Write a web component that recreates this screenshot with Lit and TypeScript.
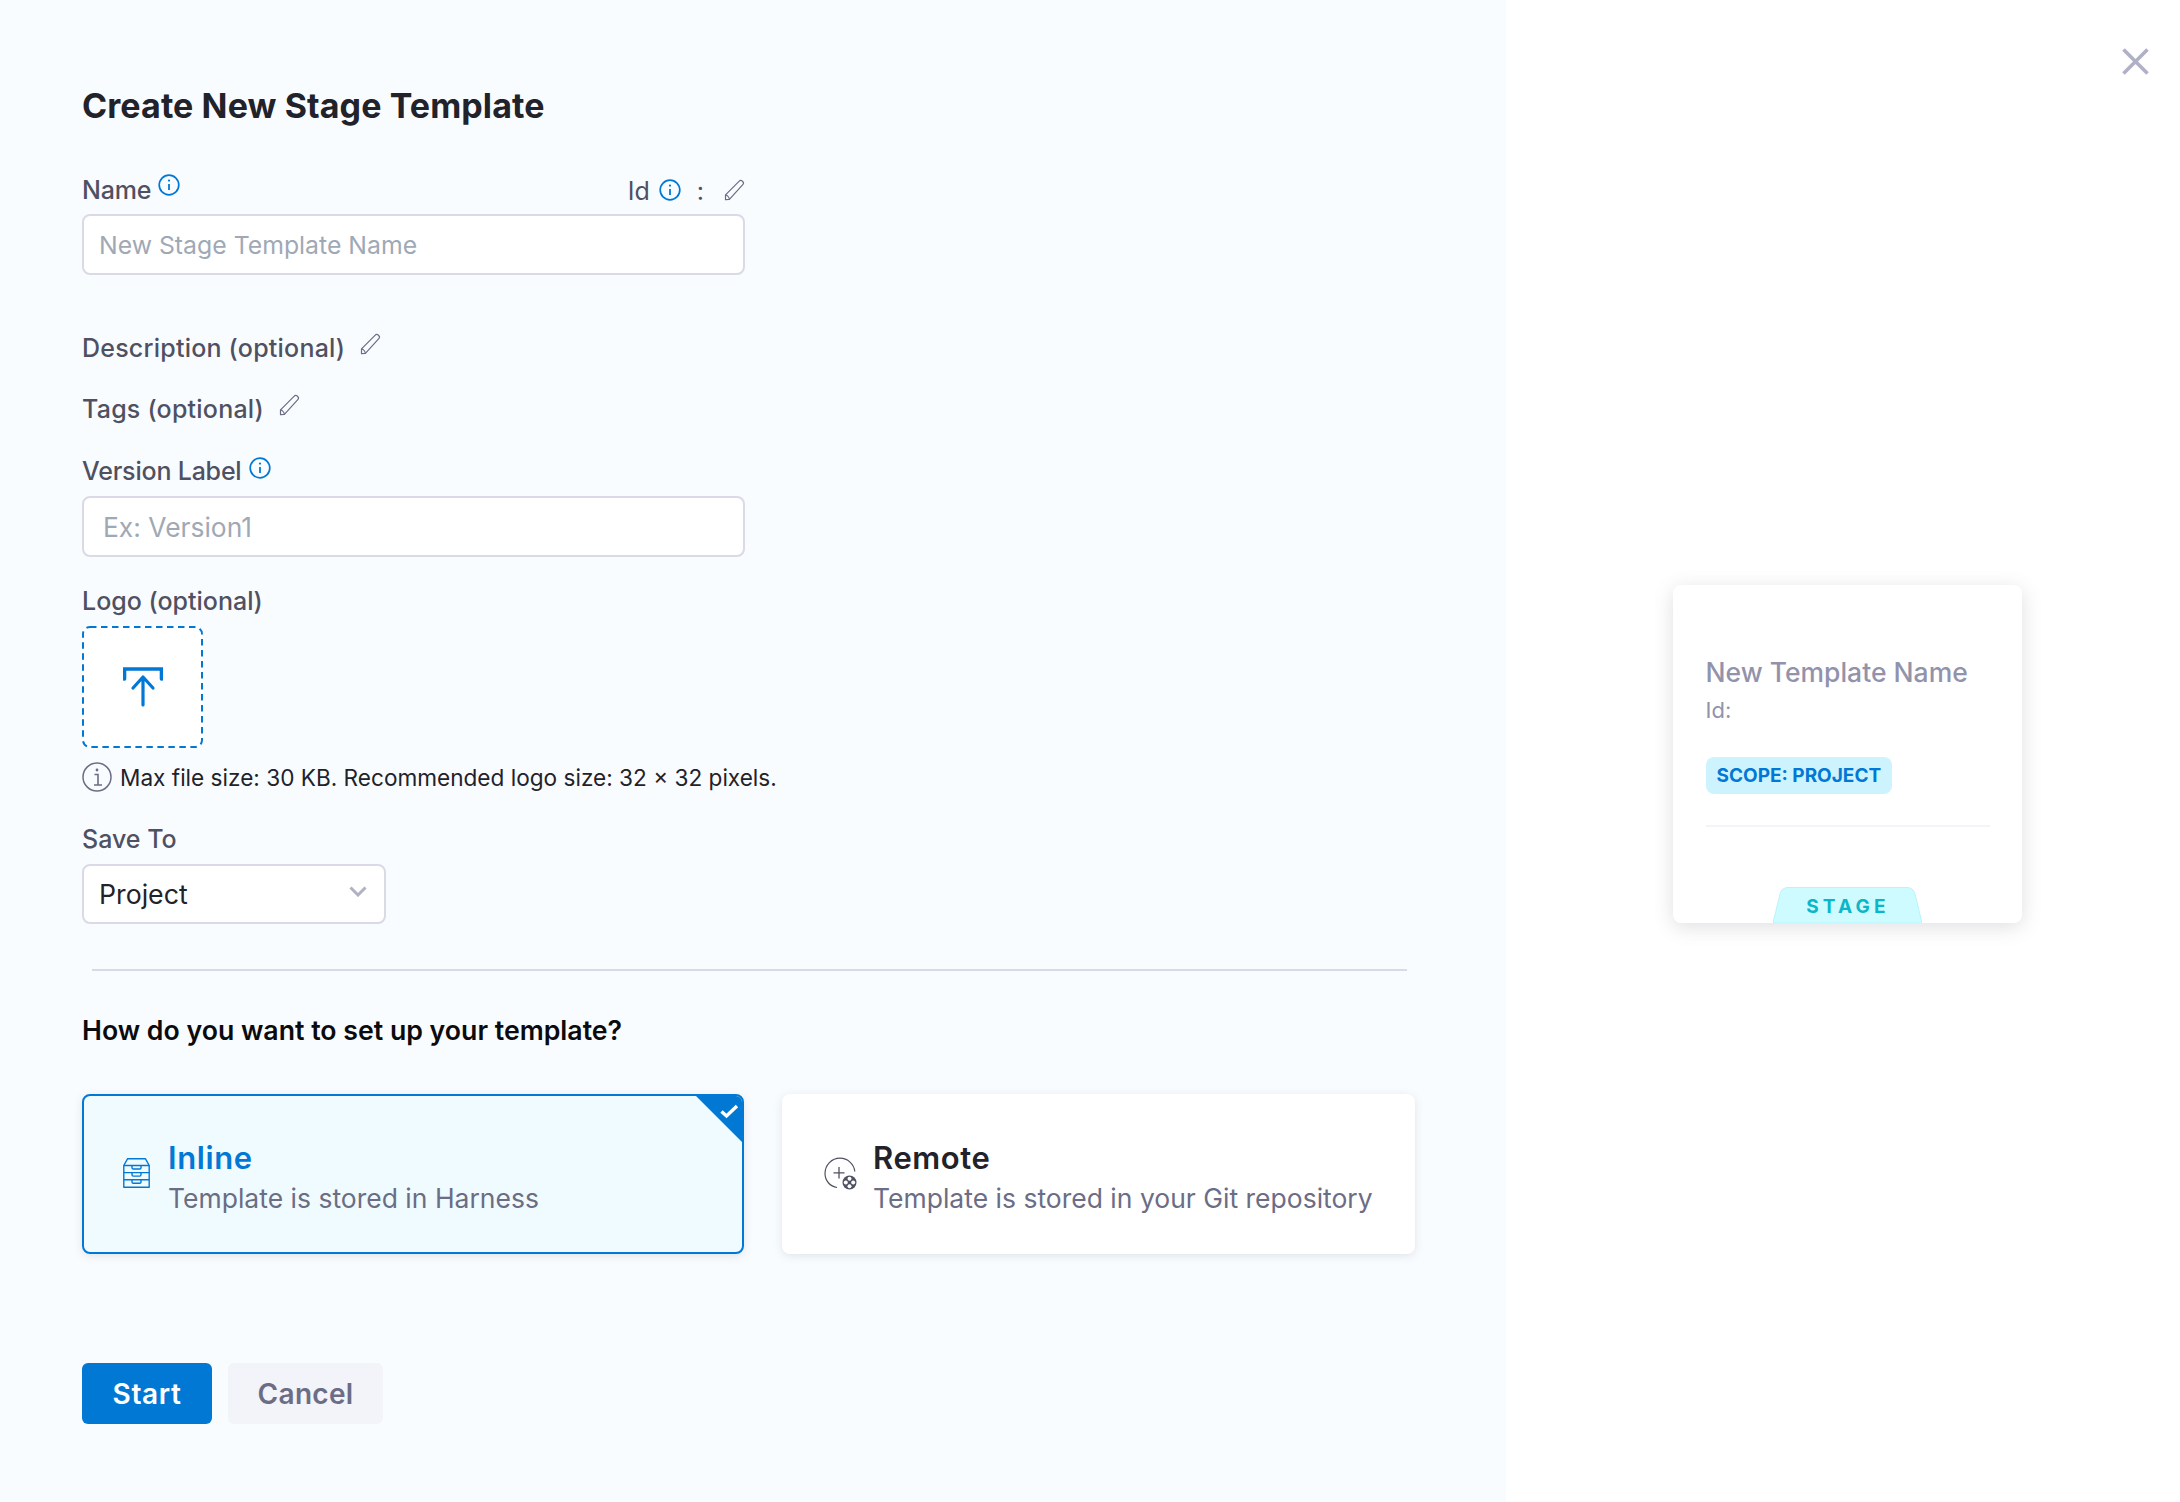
import { LitElement, html, css } from "lit";
import { customElement } from "lit/decorators.js";

const info = (cls: string) => html`<svg class=${cls} viewBox="0 0 22 22" fill="none" stroke="currentColor"><circle cx="11" cy="11" r="9.8" stroke-width="1.7"/><path d="M11 10v6" stroke-width="1.8"/><circle cx="11" cy="6.6" r="1.1" fill="currentColor" stroke="none"/></svg>`;
const pencil = html`<svg class="pencil" viewBox="0 0 22 22" fill="none" stroke="#6b6d85" stroke-width="1.2" stroke-linejoin="round"><path d="M1.5 15.8 15 2.3c1-1 2.3-1 3.5-.1 1.1 1 1.3 2.4.3 3.5L5.4 20.3l-3.9.3z"/><path d="M1.700 15.900c1.400.2 3.300 2.400 3.700 4.400"/></svg>`;

@customElement("app-root")
export class AppRoot extends LitElement {
  static styles = css`
    :host { display: block; font-family: Inter, "Noto Sans", sans-serif; color: #4f5162; }
    * { box-sizing: border-box; }
    .page { display: flex; min-height: 1502px; background: #fff; position: relative; }
    .left { width: 1506px; background: #f9fcff; padding: 86px 0 0 82px; flex: none; }
    .right { flex: 1; display: flex; justify-content: center; align-items: flex-start; padding: 585px 0 0 8px; }
    h1 { margin: 0; height: 40px; line-height: 40px; font-size: 34px; font-weight: 700; color: #22222a; letter-spacing: 0.1px; }
    .label { display: flex; align-items: center; height: 34px; font-size: 25px; font-weight: 500; color: #4f5162; width: 663px; white-space: nowrap; }
    .wide { letter-spacing: 0.22px; }
    .tight { letter-spacing: -0.2px; }
    .gap-name { margin-top: 46px; padding-top: 2px; }
    .info-blue { width: 22px; height: 22px; color: #0278d5; margin-left: 8px; flex: none; position: relative; top: -3px; }
    .gap-name > .info-blue { top: -5px; margin-left: 7px; }
    .id-group { margin-left: auto; display: flex; align-items: center; font-weight: 400; padding-top: 2px; margin-right: -1px; }
    .id-group .info-blue { top: -1px; margin-left: 9px; }
    .colon { margin: 0 20px 0 16px; }
    .pencil { width: 22px; height: 22px; flex: none; position: relative; top: -1px; }
    .desc-pencil { margin-left: 15px; display: flex; position: relative; top: -3px; }
    .field { display: block; width: 663px; height: 61px; margin-top: 8px; background: #fff; border: 2px solid #d9dae5; border-radius: 8px; padding: 0 15px; font: 400 24.8px Inter, sans-serif; color: #22222a; outline: none; }
    .field::placeholder { color: #9fa9b5; opacity: 1; }
    .field.version { padding-left: 19px; font-size: 26.4px; }
    .m56 { margin-top: 56px; } .m28 { margin-top: 28px; } .m27 { margin-top: 27px; }
    .drop { width: 121px; height: 122px; margin-top: 8px; background: #fff; border-radius: 8px; display: flex; align-items: center; justify-content: center; position: relative; }
    .drop .dash { position: absolute; inset: 0; width: 100%; height: 100%; }
    .drop .up { width: 40px; height: 40px; position: relative; }
    .hint { display: flex; align-items: center; margin-top: 12px; height: 34px; font-size: 22.6px; color: #22222a; white-space: nowrap; }
    .hint svg { width: 30px; height: 30px; margin-right: 8px; flex: none; }
    .select { display: flex; align-items: center; justify-content: space-between; width: 304px; height: 60px; margin-top: 8px; background: #fff; border: 2px solid #d9dae5; border-radius: 8px; padding: 0 17px 0 15px; font-size: 26.7px; color: #22222a; }
    .select svg { width: 18px; height: 11px; margin-top: -6px; }
    .divider { width: 1315px; height: 2px; margin: 45px 0 0 10px; background: #d9dae5; }
    h2 { margin: 42px 0 0; height: 34px; line-height: 34px; font-size: 26.7px; font-weight: 600; color: #0b0b0d; }
    .cards { display: flex; gap: 38px; margin-top: 47px; }
    .card { height: 160px; border-radius: 8px; background: #fff; display: flex; align-items: center; box-shadow: 0 2px 8px rgba(96,97,112,.16); position: relative; overflow: hidden; }
    .card.inline { width: 662px; background: #f0fbff; border: 2.5px solid #0278d5; padding-left: 39px; }
    .card.remote { width: 633px; padding-left: 42px; }
    .card .kind { width: 27px; height: 30px; flex: none; margin-right: 18px; position: relative; top: -1px; }
    .card.remote .kind { width: 33px; height: 33px; margin-right: 16px; }
    .txt { padding-top: 7px; }
    .t { font-size: 31px; font-weight: 600; line-height: 40px; letter-spacing: 0.6px; color: #22222a; }
    .inline .t { color: #0278d5; }
    .d { font-size: 26.5px; line-height: 40px; color: #6b6d85; white-space: nowrap; }
    .corner { position: absolute; top: -2px; right: -1px; width: 49px; height: 49px; }
    .actions { display: flex; gap: 16px; margin-top: 109px; }
    .btn { height: 61px; border-radius: 6px; display: flex; align-items: center; justify-content: center; font-size: 28px; font-weight: 600; letter-spacing: .6px; }
    .start { width: 130px; background: #0278d5; color: #fff; }
    .cancel { width: 155px; background: #f3f3fa; color: #6b6d85; letter-spacing: .3px; }
    .preview { width: 349px; height: 338px; background: #fff; border-radius: 8px; box-shadow: 0 4px 20px rgba(96,97,112,.2); padding: 69px 33px 0; position: relative; }
    .pname { font-size: 26.500px; line-height: 36px; font-weight: 500; color: #9293ab; white-space: nowrap; }
    .pid { font-size: 22px; line-height: 30px; color: #9293ab; margin-top: 5px; }
    .badge { display: inline-flex; align-items: center; height: 37px; padding: 0 11px; margin-top: 32px; background: #cdf4fe; border-radius: 8px; font-size: 19px; font-weight: 700; color: #0278d5; white-space: nowrap; vertical-align: top; }
    .pdiv { height: 2px; background: #f3f3fa; margin-top: 31px; width: 284px; }
    .tab { position: absolute; left: 100px; bottom: 0; width: 149px; height: 36px; display: flex; align-items: center; justify-content: center; font-size: 19px; font-weight: 700; letter-spacing: 4.2px; color: #0ab6c7; padding: 3px 0 0 2px; }
    .tab svg { position: absolute; inset: 0; width: 100%; height: 100%; }
    .tab span { position: relative; }
    .close { position: absolute; top: 48px; left: 2122px; width: 27px; height: 27px; }
  `;

  render() {
    return html`
      <div class="page">
        <div class="left">
          <h1>Create New Stage Template</h1>
          <div class="label gap-name"><span class="tight">Name</span> ${info("info-blue")}
            <div class="id-group">Id ${info("info-blue")}<span class="colon">:</span>${pencil}</div>
          </div>
          <input class="field" placeholder="New Stage Template Name" />
          <div class="label m56"><span class="wide">Description (optional)</span><span class="desc-pencil">${pencil}</span></div>
          <div class="label m27"><span class="wide">Tags (optional)</span><span class="desc-pencil">${pencil}</span></div>
          <div class="label m28"><span class="tight">Version Label</span> ${info("info-blue")}</div>
          <input class="field version" placeholder="Ex: Version1" />
          <div class="label m27">Logo (optional)</div>
          <div class="drop">
            <svg class="dash" viewBox="0 0 121 122" fill="none"><rect x="1" y="1" width="119" height="120" rx="7" stroke="#0278d5" stroke-width="2" stroke-dasharray="6.5 4.5"/></svg>
            <svg class="up" viewBox="0 0 40 40" fill="none" stroke="#0278d5" stroke-linecap="round" stroke-linejoin="round"><path d="M1.500 12V2h37v10" stroke-width="3.600" stroke-linejoin="miter"/><path d="M20 38V10M10 21 20 10l10 11" stroke-width="3.200"/></svg>
          </div>
          <div class="hint">
            <svg viewBox="0 0 30 30" fill="none" stroke="#6b6d85"><circle cx="15" cy="15" r="14" stroke-width="1.500"/><path d="M12.500 12.500H16V23M12 23h8" stroke-width="1.600"/><circle cx="15" cy="8" r="1.400" fill="#6b6d85" stroke="none"/></svg>
            Max file size: 30 KB. Recommended logo size: 32 × 32 pixels.
          </div>
          <div class="label m28">Save To</div>
          <div class="select">Project
            <svg viewBox="0 0 18 11" fill="none" stroke="#b0b1c4" stroke-width="3"><path d="M1.500 1.500 9 9l7.500-7.500"/></svg>
          </div>
          <div class="divider"></div>
          <h2>How do you want to set up your template?</h2>
          <div class="cards">
            <div class="card inline">
              <svg class="kind" viewBox="0 0 27 30" fill="none" stroke="#0278d5" stroke-width="1.400" stroke-linejoin="round"><path d="M.8 7.500 4.500.8h18l3.700 6.700v21.700H.8z"/><path d="M.8 7.500h25.400M.8 14.600h25.400M.8 21.800h25.400"/><path d="M9 7.500v2.200c0 .8.5 1.300 1.300 1.300h6.400c.8 0 1.300-.5 1.300-1.300V7.500M9 14.600v2.200c0 .8.5 1.300 1.300 1.300h6.400c.8 0 1.300-.5 1.300-1.300v-2.200M9 21.800V24c0 .8.5 1.300 1.300 1.300h6.400c.8 0 1.300-.5 1.300-1.300v-2.200"/></svg>
              <div class="txt"><div class="t">Inline</div><div class="d">Template is stored in Harness</div></div>
              <svg class="corner" viewBox="0 0 49 49"><path d="M0 0h49v49z" fill="#0278d5"/><path d="M27.500 17.500 32.500 22 43 12" fill="none" stroke="#fff" stroke-width="3.400"/></svg>
            </div>
            <div class="card remote">
              <svg class="kind" viewBox="0 0 33 33" fill="none" stroke="#4f5162"><path d="M13 30.500C6 29.500 1 23.500 1 16.500 1 8 7.800 1.200 16 1.200c7.800 0 14 6 14.800 13.300" stroke-width="1.200"/><path d="M15 10v11.500M9.500 15.800h11" stroke-width="1.300"/><circle cx="25.500" cy="25.500" r="7" fill="#4f5162" stroke="none"/><g fill="#fff" stroke="none"><circle cx="25.500" cy="21.800" r="2"/><circle cx="25.500" cy="29.200" r="2"/><circle cx="21.800" cy="25.500" r="2"/><circle cx="29.200" cy="25.500" r="2"/></g></svg>
              <div class="txt"><div class="t">Remote</div><div class="d">Template is stored in your Git repository</div></div>
            </div>
          </div>
          <div class="actions">
            <div class="btn start">Start</div>
            <div class="btn cancel">Cancel</div>
          </div>
        </div>
        <div class="right">
          <div class="preview">
            <div class="pname">New Template Name</div>
            <div class="pid">Id:</div>
            <div class="badge">SCOPE: PROJECT</div>
            <div class="pdiv"></div>
            <div class="tab">
              <svg viewBox="0 0 149 36" preserveAspectRatio="none"><path d="M0 36 7 7c1-4 4-6.500 8-6.500h119c4 0 7 2.500 8 6.500l7 29z" fill="#cdfbff" stroke="#b5f5fb"/></svg>
              <span>STAGE</span>
            </div>
          </div>
        </div>
        <svg class="close" viewBox="0 0 27 27" fill="none" stroke="#b0b1c4" stroke-width="3.600"><path d="M1.500 1.500l24 24M25.500 1.500l-24 24"/></svg>
      </div>
    `;
  }
}
